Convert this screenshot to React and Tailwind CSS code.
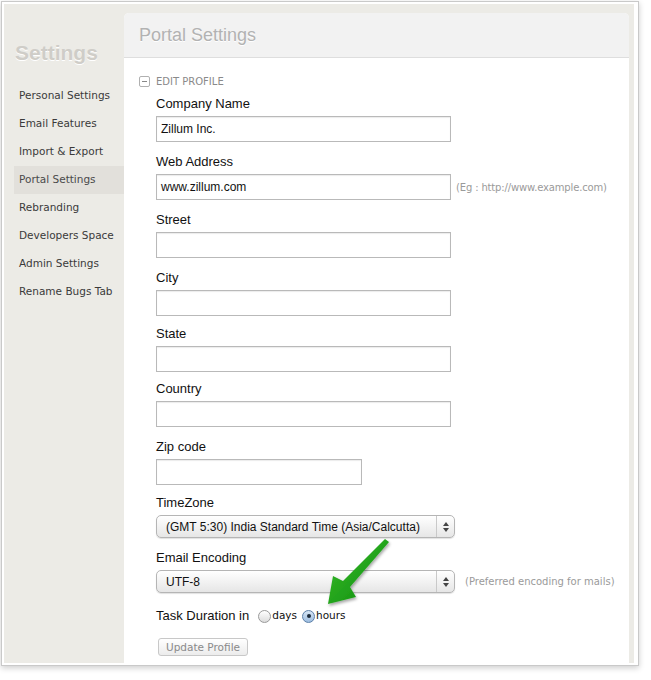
import React from "react";

const navItems = [
  "Personal Settings",
  "Email Features",
  "Import & Export",
  "Portal Settings",
  "Rebranding",
  "Developers Space",
  "Admin Settings",
  "Rename Bugs Tab",
];

const lucida = { fontFamily: '"DejaVu Sans", "Open Sans", sans-serif' };

function Field({ label, value = "", width = "w-[295px]", hint, className = "" }) {
  return (
    <div className={className}>
      <div className="text-[13px] leading-[16px] text-[#111]">{label}</div>
      <div className="mt-[4px] flex items-center">
        <div
          className={`${width} h-[26px] border border-[#b9b9b9] bg-white shadow-[inset_0_1px_1px_rgba(0,0,0,0.08)] px-[4px] flex items-center text-[12px] text-[#111]`}
        >
          {value}
        </div>
        {hint && (
          <span className="ml-[5px] text-[10px] tracking-[-0.15px] text-[#9a9a9a]" style={lucida}>
            {hint}
          </span>
        )}
      </div>
    </div>
  );
}

function SelectBox({ value }) {
  return (
    <div className="w-[299px] h-[23px] rounded-[5px] border border-[#b5b5b5] bg-gradient-to-b from-white to-[#e6e6e6] shadow-[0_1px_1px_rgba(0,0,0,0.12)] flex items-center">
      <span className="flex-1 pl-[9px] text-[12px] text-[#111] whitespace-nowrap">{value}</span>
      <span className="w-[18px] h-full border-l border-[#c9c9c9] flex flex-col items-center justify-center gap-[2px]">
        <svg width="6" height="4" viewBox="0 0 6 4">
          <path d="M0 4 L3 0 L6 4 Z" fill="#444" />
        </svg>
        <svg width="6" height="4" viewBox="0 0 6 4">
          <path d="M0 0 L3 4 L6 0 Z" fill="#444" />
        </svg>
      </span>
    </div>
  );
}

function Radio({ checked }) {
  return (
    <span
      className={`inline-flex w-[13px] h-[13px] rounded-full border items-center justify-center ${
        checked
          ? "border-[#5b7fa8] bg-gradient-to-b from-[#d7e6f5] to-[#9dbde0]"
          : "border-[#9a9a9a] bg-gradient-to-b from-white to-[#dcdcdc]"
      }`}
    >
      {checked && <span className="w-[4px] h-[4px] rounded-full bg-[#1b2a3a]" />}
    </span>
  );
}

export default function App() {
  return (
    <div
      className="relative w-[651px] h-[680px] bg-white"
      style={{ fontFamily: '"Liberation Sans", Arial, sans-serif' }}
    >
      <div className="absolute left-[1px] top-[1px] w-[638px] h-[665px] border border-[#c9c9c9] bg-white pl-[2px] pt-[2px] pb-[2px] pr-[4px] shadow-[0_2px_6px_rgba(0,0,0,0.2)]">
        <div className="w-full h-full bg-[#ecebe6] flex pr-[5px] pt-[9px]">
          {/* Sidebar */}
          <div className="w-[120px] shrink-0 -mt-[9px]">
            <div
              className="pl-[11px] pt-[37px] text-[21px] font-bold text-[#cfcdc8] leading-[24px]"
              style={{ textShadow: "0 1px 0 #fff" }}
            >
              Settings
            </div>
            <div className="mt-[17px] pl-[10px]">
              {navItems.map((item) => (
                <div
                  key={item}
                  className={`h-[28px] flex items-center pl-[5px] text-[10.5px] ${
                    item === "Portal Settings" ? "bg-[#e2e0db] text-[#4a4a4a] font-medium" : "text-[#3a3a3a]"
                  }`}
                  style={lucida}
                >
                  {item}
                </div>
              ))}
            </div>
          </div>

          {/* Panel */}
          <div className="flex-1 bg-white rounded-t-[5px] flex flex-col overflow-hidden">
            <div className="h-[45px] bg-[#f2f2f2] border-b border-[#dedede] flex items-center pl-[15px]">
              <span
                className="text-[18px] text-[#b2b2b2]"
                style={{ textShadow: "0 1px 0 #fff" }}
              >
                Portal Settings
              </span>
            </div>

            <div className="pl-[15px] pt-[15px]">
              <div className="h-[16px] flex items-center">
                <span className="w-[11px] h-[11px] border border-[#b0b0b0] rounded-[2px] flex items-center justify-center">
                  <span className="w-[5px] h-[1px] bg-[#888]" />
                </span>
                <span className="ml-[6px] text-[10px] text-[#8a8a8a] uppercase" style={lucida}>
                  Edit Profile
                </span>
              </div>

              <div className="pl-[17px]">
                <Field className="mt-[7px]" label="Company Name" value="Zillum Inc." />
                <Field
                  className="mt-[12px]"
                  label="Web Address"
                  value="www.zillum.com"
                  hint="(Eg : http://www.example.com)"
                />
                <Field className="mt-[12px]" label="Street" />
                <Field className="mt-[12px]" label="City" />
                <Field className="mt-[10px]" label="State" />
                <Field className="mt-[9px]" label="Country" />
                <Field className="mt-[12px]" label="Zip code" width="w-[206px]" />

                <div className="mt-[10px]">
                  <div className="text-[13px] leading-[16px] text-[#111]">TimeZone</div>
                  <div className="mt-[4px]">
                    <SelectBox value="(GMT 5:30) India Standard Time (Asia/Calcutta)" />
                  </div>
                </div>

                <div className="mt-[12px]">
                  <div className="text-[13px] leading-[16px] text-[#111]">Email Encoding</div>
                  <div className="mt-[4px] flex items-center">
                    <SelectBox value="UTF-8" />
                    <span className="ml-[10px] text-[10px] text-[#9a9a9a]" style={lucida}>
                      (Preferred encoding for mails)
                    </span>
                  </div>
                </div>

                <div className="mt-[15px] h-[16px] flex items-center text-[13px] text-[#111]">
                  <span>Task Duration in</span>
                  <span className="ml-[9px] flex items-center">
                    <Radio />
                    <span className="ml-[1px] text-[10.5px]" style={lucida}>days</span>
                  </span>
                  <span className="ml-[5px] flex items-center">
                    <Radio checked />
                    <span className="ml-[1px] text-[10.5px]" style={lucida}>hours</span>
                  </span>
                </div>

                <div className="mt-[10px] ml-[2px]">
                  <button
                    className="h-[18px] px-[7px] border border-[#c8c8c8] rounded-[3px] bg-gradient-to-b from-white to-[#ececec] text-[10.5px] text-[#8a8a8a] leading-none"
                    style={lucida}
                  >
                    Update Profile
                  </button>
                </div>
              </div>
            </div>
          </div>
        </div>
      </div>

      {/* green callout arrow */}
      <svg
        className="absolute left-0 top-0 pointer-events-none"
        width="651"
        height="680"
        viewBox="0 0 651 680"
      >
        <defs>
          <linearGradient id="ga" x1="0" y1="0" x2="1" y2="1">
            <stop offset="0" stopColor="#3cbf2c" />
            <stop offset="1" stopColor="#0c8a0c" />
          </linearGradient>
          <filter id="sh" x="-20%" y="-20%" width="140%" height="140%">
            <feDropShadow dx="1" dy="2" stdDeviation="1.5" floodColor="#000" floodOpacity="0.35" />
          </filter>
        </defs>
        <path
          d="M385 539 L389 542 L350 587 L356 597 L328 604 L333 576 L343 581 Z"
          fill="url(#ga)"
          filter="url(#sh)"
        />
      </svg>
    </div>
  );
}
